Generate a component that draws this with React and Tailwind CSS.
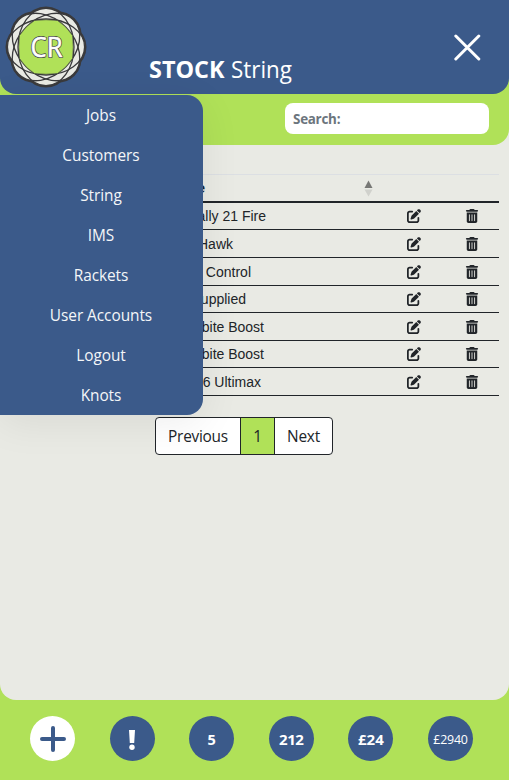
import { FaPenToSquare, FaTrashCan } from "react-icons/fa6";

const menu = ["Jobs", "Customers", "String", "IMS", "Rackets", "User Accounts", "Logout", "Knots"];

const rows = [
  { name: "Rally 21 Fire", width: "w-[256px]", height: "h-[27px]" },
  { name: "Hawk", width: "w-[223px]", height: "h-[28px]" },
  { name: "Control", width: "w-[241px]", height: "h-[28px]" },
  { name: "supplied", width: "w-[236px]", height: "h-[27px]" },
  { name: "bite Boost", width: "w-[254px]", height: "h-[28px]" },
  { name: "bite Boost", width: "w-[254px]", height: "h-[27px]" },
  { name: "6 Ultimax", width: "w-[251px]", height: "h-[28px]" },
];

const petals = [0, 45, 90, 135];

function Logo() {
  return (
    <svg width="82" height="82" viewBox="-41 -41 82 82" className="block">
      {petals.map((a) => (
        <ellipse key={a} rx="28.5" ry="39" transform={`rotate(${a})`} fill="#e9eae4" stroke="#3a3a3c" strokeWidth="3" />
      ))}
      {petals.map((a) => (
        <ellipse key={a} rx="28.3" ry="38.6" transform={`rotate(${a})`} fill="#e9eae4" />
      ))}
      {petals.map((a) => (
        <ellipse key={a} rx="28" ry="38.6" transform={`rotate(${a})`} fill="none" stroke="#3a3a3c" strokeWidth="1.3" />
      ))}
      <path
        d="M-11.5 -26.5Q0 -28 11.5 -26.5Q20.5 -21 26.5 -11.5Q28 0 26.5 11.5Q20.5 21 11.5 26.5Q0 28 -11.5 26.5Q-20.5 21 -26.5 11.5Q-28 0 -26.5 -11.5Q-20.5 -21 -11.5 -26.5Z"
        fill="#b0e158"
        stroke="#3a3a3c"
        strokeWidth="0.6"
      />
      <text
        x="0.5"
        y="10"
        textAnchor="middle"
        textLength="32"
        lengthAdjust="spacingAndGlyphs"
        fontFamily="'Open Sans', sans-serif"
        fontSize="26.5"
        fontWeight="400"
        fill="#fff"
        stroke="#3a3a3c"
        strokeWidth="2"
        strokeLinejoin="round"
      >
        CR
      </text>
      <text
        x="0.5"
        y="10"
        textAnchor="middle"
        textLength="32"
        lengthAdjust="spacingAndGlyphs"
        fontFamily="'Open Sans', sans-serif"
        fontSize="26.5"
        fontWeight="400"
        fill="#fff"
        stroke="#fff"
        strokeWidth="0.6"
        aria-hidden="true"
      >
        CR
      </text>
    </svg>
  );
}

const circle = "flex h-[45px] w-[45px] items-center justify-center rounded-full bg-[#3b5a8a] text-white";

export default function App() {
  return (
    <div className="relative flex h-[780px] w-[509px] flex-col overflow-hidden bg-[#b0e158] font-['Open_Sans',sans-serif] text-[#212529]">
      <div className="flex h-[700px] flex-col rounded-b-[16px] bg-[#e9eae4]">
        <div className="h-[145px] rounded-br-[16px] bg-[#b0e158]">
          <header className="flex h-[94px] rounded-b-[16px] bg-[#3b5a8a] pl-[5px] pt-[6px]">
            <Logo />
            <h1 className="ml-[62px] mt-[46px] h-9 w-[145px] whitespace-nowrap text-[23.5px] leading-9 text-white">
              <svg width="145" height="36" className="block overflow-visible">
                <text y="26" textLength="75.5" lengthAdjust="spacingAndGlyphs" fontWeight="700" fill="#fff">STOCK</text>
                <text x="82" y="26" textLength="61" lengthAdjust="spacingAndGlyphs" fill="#fff">String</text>
              </svg>
            </h1>
            <svg width="28" height="28" viewBox="0 0 28 28" className="ml-[159px] mt-[27px]">
              <path d="M2.8 3 25.8 26M25.8 3 2.8 26" stroke="#fff" strokeWidth="3" strokeLinecap="round" />
            </svg>
          </header>
          <div className="flex justify-end pr-5 pt-[9px]">
            <div className="flex h-[31px] w-[204px] items-center rounded-lg bg-white pl-2 pt-px text-[13.4px] font-bold tracking-[-0.25px] text-[#6c757d]">
              Search:
            </div>
          </div>
        </div>

        <div className="mx-[10px] mt-[29px] font-['Liberation_Sans',sans-serif] text-[14px]">
          <div className="flex h-[29px] items-center border-b-2 border-t border-b-[#212529] border-t-[#dcdfe3]">
            <span className="w-[195px] text-right font-bold">Name</span>
            <svg width="9" height="17" viewBox="0 0 9 17" className="ml-[159px]">
              <path d="M4.5 .5 8.5 8H.5Z" fill="#777875" />
              <path d="M4.5 16.5 8.5 9.5H.5Z" fill="#d0d1cc" />
            </svg>
          </div>
          {rows.map((r, i) => (
            <div key={i} className={`flex items-center border-b border-[#212529] ${r.height}`}>
              <div className="w-[397px]">
                <div className={`text-right leading-5 ${r.width}`}>{r.name}</div>
              </div>
              <FaPenToSquare size={14} />
              <FaTrashCan size={14} className="ml-[43.5px]" />
            </div>
          ))}
        </div>

        <div className="ml-[155px] mt-[21px] flex h-[38px] w-[178px] overflow-hidden rounded-[4px] border border-[#212529] bg-white text-[15.4px] tracking-[-0.25px]">
          <span className="flex w-[85px] items-center justify-center border-r border-[#212529] pt-0.5">Previous</span>
          <span className="flex w-[34px] items-center justify-center border-r border-[#212529] bg-[#b0e158] pt-0.5">1</span>
          <span className="flex flex-1 items-center justify-center pt-0.5">Next</span>
        </div>
      </div>

      <footer className="flex h-20 items-center justify-between pb-[3px] pl-[30px] pr-[36px]">
        <div className="flex h-[45px] w-[45px] items-center justify-center rounded-full bg-white">
          <svg width="28" height="28" viewBox="0 0 28 28">
            <path d="M14 3V25M3 14H25" stroke="#3b5a8a" strokeWidth="4" strokeLinecap="round" />
          </svg>
        </div>
        <div className={circle}>
          <svg width="8" height="22" viewBox="0 0 8 22" className="mt-[3px]">
            <path d="M1 1H7L6.2 14H1.8Z" fill="#fff" />
            <circle cx="4" cy="18.3" r="2.7" fill="#fff" />
          </svg>
        </div>
        <div className={circle}><span className="mt-[2px] text-[14.5px] font-bold">5</span></div>
        <div className={circle}><span className="mt-px text-[15px] font-bold tracking-[-0.4px]">212</span></div>
        <div className={circle}><span className="mt-px text-[15px] font-bold">£24</span></div>
        <div className={circle}><span className="mt-[3px] text-[12.4px] tracking-[-0.2px]">£2940</span></div>
      </footer>

      <nav className="absolute left-0 top-[95px] flex h-[320px] w-[203px] flex-col rounded-r-[16px] bg-[#3b5a8a] pr-px shadow-[0_8px_40px_rgba(0,0,0,0.07)]">
        {menu.map((m) => (
          <a key={m} className="flex h-10 items-center justify-center pt-[2px] text-[15.4px] font-medium tracking-[-0.05px] text-[#f4f6f8]">
            {m}
          </a>
        ))}
      </nav>
    </div>
  );
}
